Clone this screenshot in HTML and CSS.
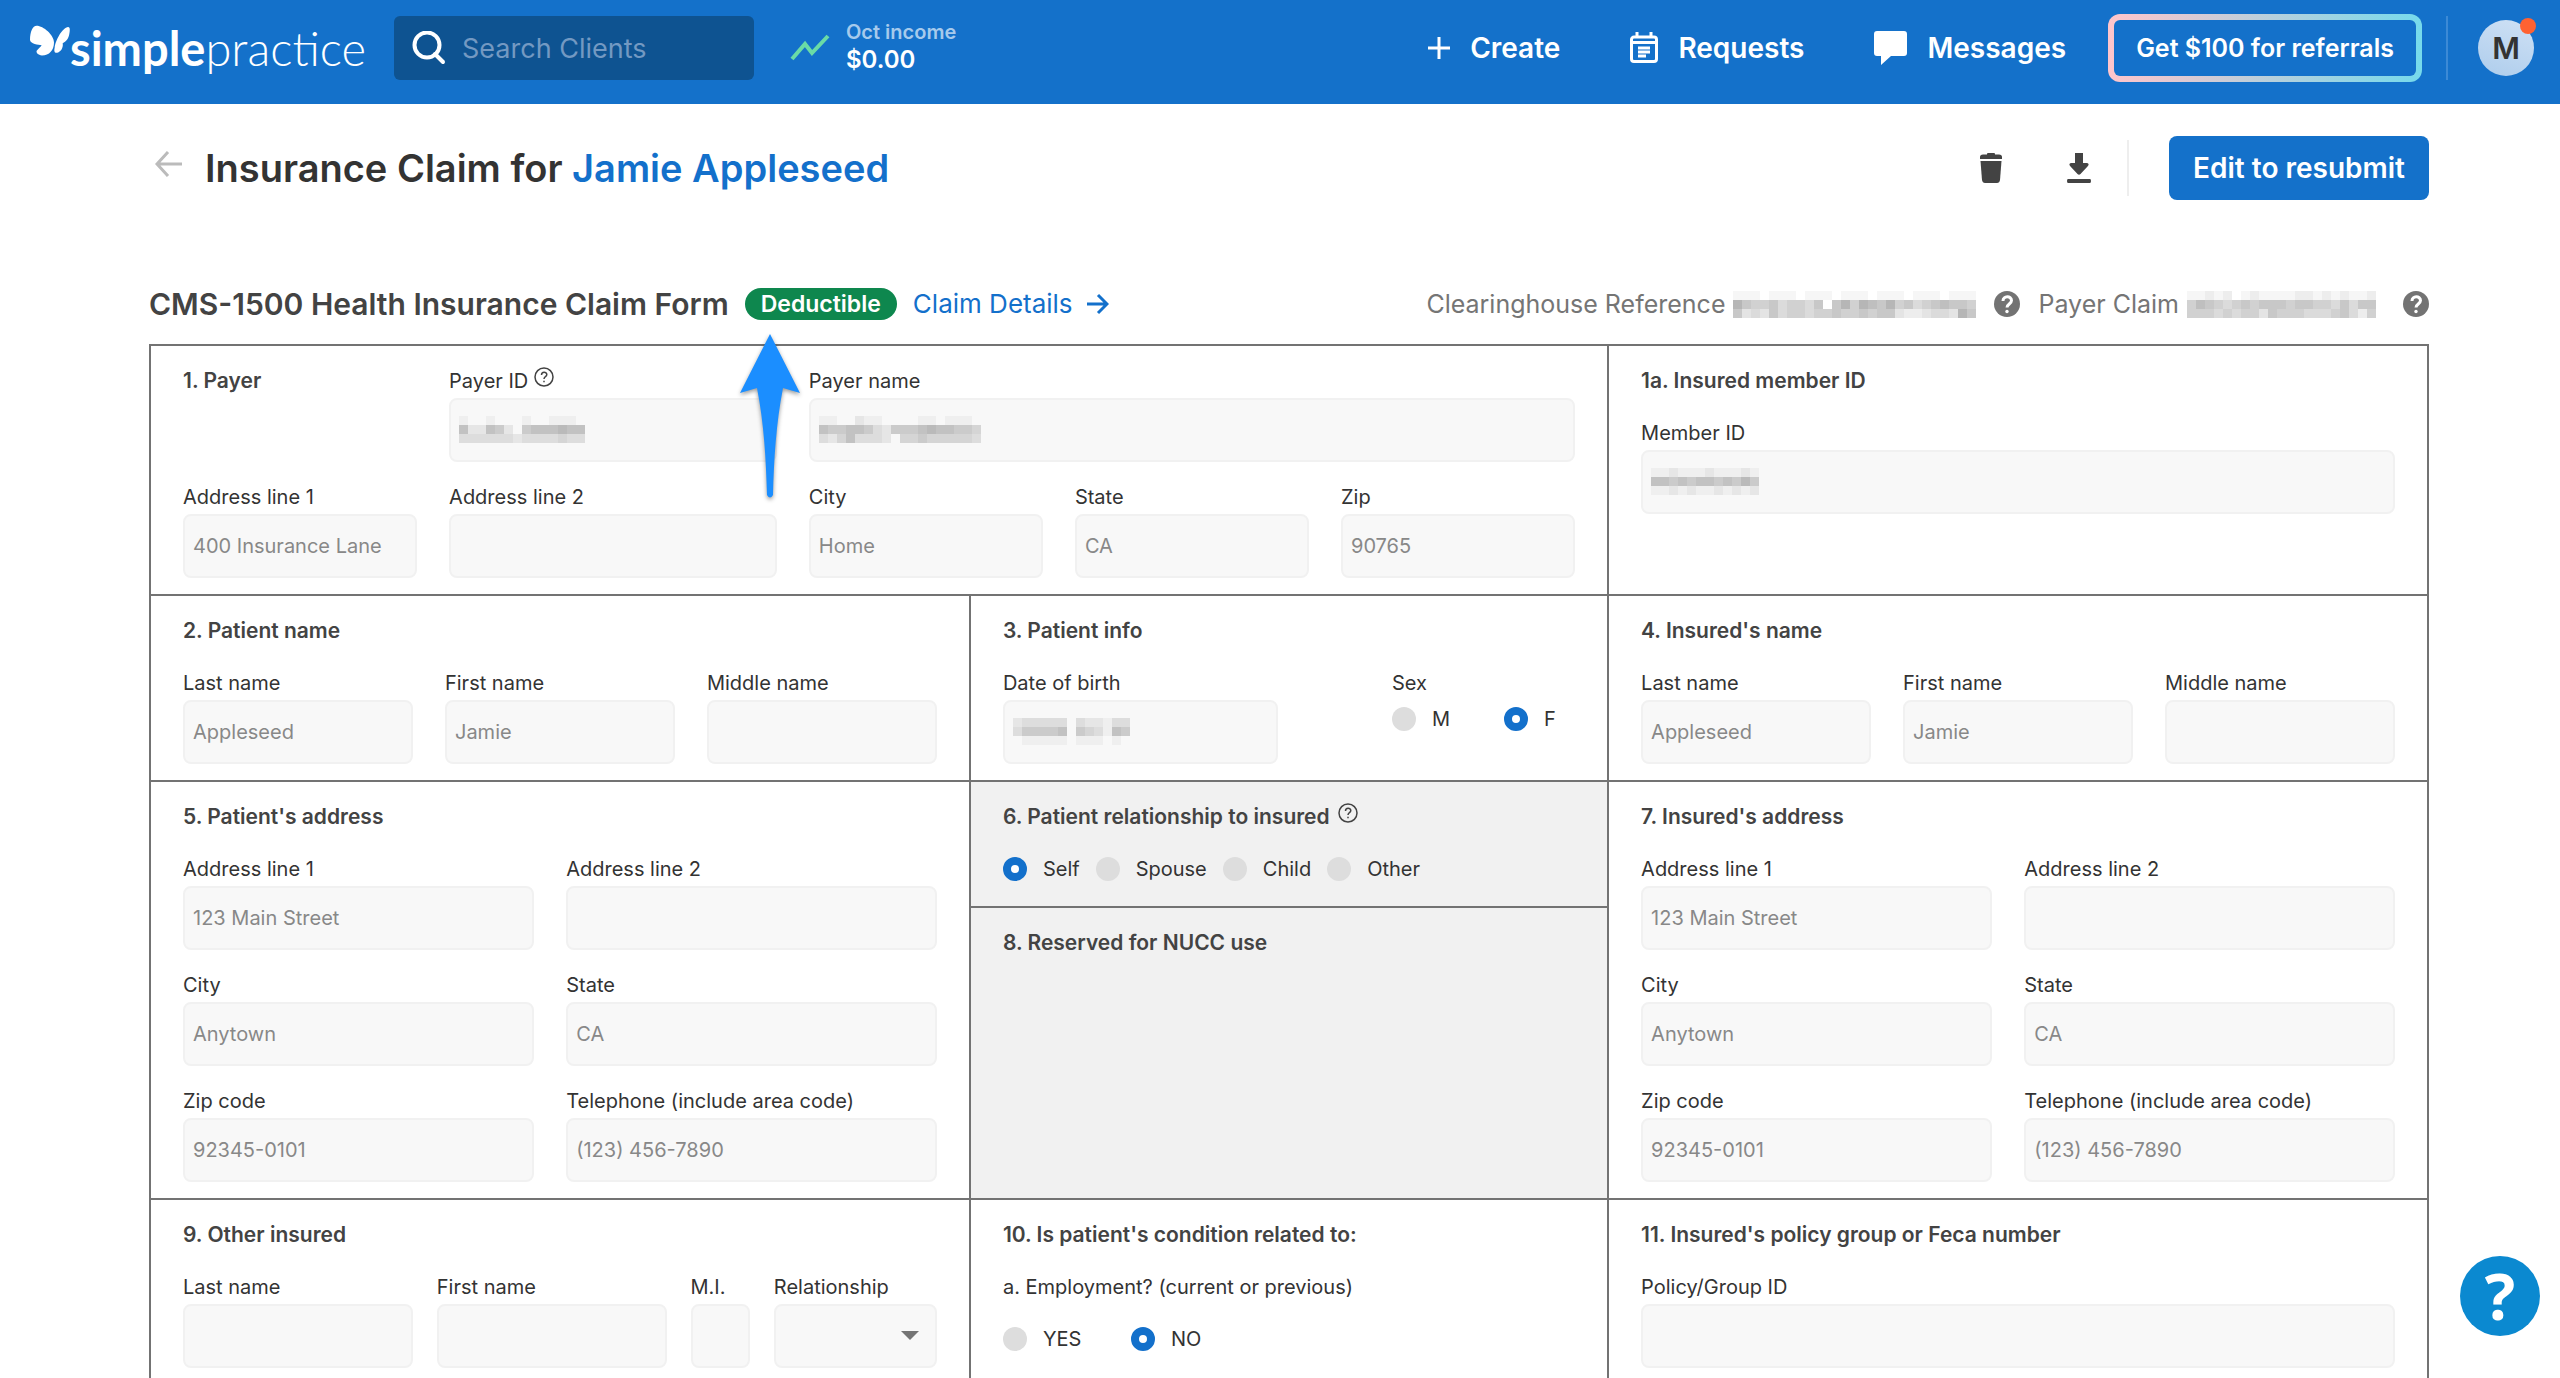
FILE: index.html
```html
<!DOCTYPE html>
<html lang="en">
<head>
    <meta charset="UTF-8">
    <meta name="viewport" content="width=device-width, initial-scale=1.0">
    <title>Insurance Claim</title>
    <link rel="stylesheet" href="styles.css">
</head>
<body>
    <header class="topbar">
        <a class="logo" href="#">
            <svg class="logo-mark" viewBox="30 40 120 92" width="40" height="31">
                <path d="M50 42 C70 42 102 70 102 92 C102 115 88 131 66 131 C54 130 48 123 50 117 C54 111 61 106 65 100 C56 100 30 96 30 84 C30 60 38 42 50 42 Z"/>
                <path d="M142 46 C151 44 150 54 148 66 C146 80 138 90 128 94 C130 104 126 118 112 123 C102 124 102 116 104 108 C106 84 128 48 142 46 Z"/>
            </svg>
            <span class="logo-text"><b>simple</b>practice</span>
        </a>
        <div class="search">
            <svg viewBox="0 0 34 34" width="34" height="34">
                <circle cx="15" cy="14" r="12.5"/>
                <path d="M23 23 L31 31"/>
            </svg>
            <input type="text" placeholder="Search Clients" aria-label="Search Clients">
        </div>
        <a class="income" href="#">
            <svg viewBox="0 0 40 28" width="40" height="28">
                <path d="M2 25 L15 10 L22 19 L38 2"/>
            </svg>
            <span class="income-text">
                <span class="income-label">Oct income</span>
                <span class="income-value">$0.00</span>
            </span>
        </a>
        <nav class="top-nav">
            <button class="nav-item">
                <svg viewBox="0 0 22 22" width="22" height="22"><path class="line" d="M11 0 V22 M0 11 H22"/></svg>
                Create
            </button>
            <button class="nav-item">
                <svg viewBox="0 0 28 32" width="28" height="32">
                    <path class="line" d="M4 5 H24 A2.5 2.5 0 0 1 26.500 7.500 V27 A2.500 2.500 0 0 1 24 29.500 H4 A2.500 2.500 0 0 1 1.500 27 V7.500 A2.500 2.500 0 0 1 4 5 Z M7 0 V5 M21 0 V5 M2 10.500 H26 M8 16 H20 M8 20 H20 M8 24 H16"/>
                </svg>
                Requests
            </button>
            <button class="nav-item">
                <svg viewBox="0 0 33 34" width="33" height="34"><path class="solid" d="M3 0 H30 A3 3 0 0 1 33 3 V22 A3 3 0 0 1 30 25 H17 L7 34 V25 H3 A3 3 0 0 1 0 22 V3 A3 3 0 0 1 3 0 Z"/></svg>
                Messages
            </button>
        </nav>
        <button class="referral">Get $100 for referrals</button>
        <div class="account">
            <button class="avatar">M<span class="avatar-dot"></span></button>
        </div>
    </header>

    <main class="page">
        <div class="page-header">
            <a class="back" href="#" aria-label="Back">
                <svg viewBox="0 0 28 26" width="28" height="26"><path d="M27 13 H2 M13 1 L2 13 L13 25"/></svg>
            </a>
            <h1>Insurance Claim for <a href="#">Jamie Appleseed</a></h1>
            <div class="page-actions">
                <button class="icon-btn" aria-label="Delete">
                    <svg viewBox="0 0 24 32" width="24" height="32">
                        <path d="M8 2 Q8 1 9 1 H15 Q16 1 16 2 V2.500 H20 Q23 2.500 23 5 V7 H1 V5 Q1 2.500 4 2.500 H8 Z"/>
                        <path d="M1.500 9 H22.500 L21 28 Q20.500 31 18 31 H6 Q3.500 31 3 28 Z"/>
                    </svg>
                </button>
                <button class="icon-btn" aria-label="Download">
                    <svg viewBox="0 0 24 32" width="24" height="32">
                        <path d="M8 1 H16 V11 H20 Q23 12 20.500 14.500 L13.500 22 Q12 23.500 10.500 22 L3.500 14.500 Q1 12 4 11 H8 Z M1 27 H23 Q24 27 24 29 Q24 31 23 31 H1 Q0 31 0 29 Q0 27 1 27 Z"/>
                    </svg>
                </button>
                <button class="primary-btn">Edit to resubmit</button>
            </div>
        </div>

        <div class="claim-header">
            <h2>CMS-1500 Health Insurance Claim Form</h2>
            <div class="status">
                <span class="badge">Deductible</span>
                <svg class="pointer" viewBox="0 0 60 164" width="60" height="164">
                    <path d="M30 0 L60 59 L43 54 C36 90 34 125 33 161 Q30 166 27 161 C26 125 24 90 17 54 L0 59 Z"/>
                </svg>
            </div>
            <a class="details-link" href="#">
                Claim Details
                <svg viewBox="0 0 22 22" width="22" height="22"><path d="M0 11 H20 M11 2 L20 11 L11 20"/></svg>
            </a>
            <div class="references">
                <span>Clearinghouse Reference</span>
                <svg class="pixels" data-rows="111011101110111011101110111 865564554606858768564567665 634364554556556566322344386"></svg>
                <svg class="help-dot" viewBox="0 0 26 26" width="26" height="26"><circle cx="13" cy="13" r="13"/><path d="M9 10 C9 4.500 17.500 4.500 17.500 9.500 C17.500 13 13 13 13 16.500"/><circle class="dot" cx="13" cy="20.500" r="1.700"/></svg>
                <span>Payer Claim</span>
                <svg class="pixels" data-rows="1121201211112212121120 5765456566656655464660 5554545536555444564250"></svg>
                <svg class="help-dot" viewBox="0 0 26 26" width="26" height="26"><circle cx="13" cy="13" r="13"/><path d="M9 10 C9 4.500 17.500 4.500 17.500 9.500 C17.500 13 13 13 13 16.500"/><circle class="dot" cx="13" cy="20.500" r="1.700"/></svg>
            </div>
        </div>

        <form class="claim-form">
            <section class="box wide">
                <div class="fields payer">
                    <h3>1. Payer</h3>
                    <label class="field"><span class="label">Payer ID
                        <svg class="help-ring" viewBox="0 0 20 20" width="20" height="20"><circle cx="10" cy="10" r="9"/><path d="M7.500 8 C7.500 4.500 12.800 4.500 12.800 7.600 C12.800 9.800 10 9.600 10 12 M10 13.800 V15.200"/></svg></span>
                        <input type="text" readonly>
                        <svg class="pixels" data-rows="10010001001110 62265205666766 33333323333433"></svg>
                    </label>
                    <label class="field payer-name"><span class="label">Payer name</span><input type="text" readonly>
                        <svg class="pixels" data-rows="110021100001101110 655665325556766554 324633320445444443"></svg>
                    </label>
                    <label class="field"><span class="label">Address line 1</span><input type="text" value="400 Insurance Lane" readonly></label>
                    <label class="field"><span class="label">Address line 2</span><input type="text" readonly></label>
                    <label class="field"><span class="label">City</span><input type="text" value="Home" readonly></label>
                    <label class="field"><span class="label">State</span><input type="text" value="CA" readonly></label>
                    <label class="field"><span class="label">Zip</span><input type="text" value="90765" readonly></label>
                </div>
            </section>
            <section class="box">
                <h3>1a. Insured member ID</h3>
                <label class="field"><span class="label">Member ID</span><input type="text" readonly>
                    <svg class="pixels" data-rows="112111211121 665656656575 112121121212"></svg>
                </label>
            </section>

            <section class="box">
                <h3>2. Patient name</h3>
                <div class="fields thirds">
                    <label class="field"><span class="label">Last name</span><input type="text" value="Appleseed" readonly></label>
                    <label class="field"><span class="label">First name</span><input type="text" value="Jamie" readonly></label>
                    <label class="field"><span class="label">Middle name</span><input type="text" readonly></label>
                </div>
            </section>
            <section class="box">
                <h3>3. Patient info</h3>
                <div class="patient-info">
                    <label class="field dob"><span class="label">Date of birth</span><input type="text" readonly>
                        <svg class="pixels" data-rows="2333330322133 3555560543165 0111110111010"></svg>
                    </label>
                    <fieldset class="sex">
                        <legend class="label">Sex</legend>
                        <div class="options">
                            <label class="option"><input type="radio" name="sex">M</label>
                            <label class="option"><input type="radio" name="sex" checked>F</label>
                        </div>
                    </fieldset>
                </div>
            </section>
            <section class="box">
                <h3>4. Insured's name</h3>
                <div class="fields thirds">
                    <label class="field"><span class="label">Last name</span><input type="text" value="Appleseed" readonly></label>
                    <label class="field"><span class="label">First name</span><input type="text" value="Jamie" readonly></label>
                    <label class="field"><span class="label">Middle name</span><input type="text" readonly></label>
                </div>
            </section>

            <section class="box">
                <h3>5. Patient's address</h3>
                <div class="fields address">
                    <label class="field"><span class="label">Address line 1</span><input type="text" value="123 Main Street" readonly></label>
                    <label class="field"><span class="label">Address line 2</span><input type="text" readonly></label>
                    <label class="field"><span class="label">City</span><input type="text" value="Anytown" readonly></label>
                    <label class="field"><span class="label">State</span><input type="text" value="CA" readonly></label>
                    <label class="field"><span class="label">Zip code</span><input type="text" value="92345-0101" readonly></label>
                    <label class="field"><span class="label">Telephone (include area code)</span><input type="text" value="(123) 456-7890" readonly></label>
                </div>
            </section>
            <div class="stack">
                <section class="box shaded relationship">
                    <h3>6. Patient relationship to insured
                        <svg class="help-ring" viewBox="0 0 20 20" width="20" height="20"><circle cx="10" cy="10" r="9"/><path d="M7.500 8 C7.500 4.500 12.800 4.500 12.800 7.600 C12.800 9.800 10 9.600 10 12 M10 13.800 V15.200"/></svg></h3>
                    <div class="options">
                        <label class="option"><input type="radio" name="relationship" checked>Self</label>
                        <label class="option"><input type="radio" name="relationship">Spouse</label>
                        <label class="option"><input type="radio" name="relationship">Child</label>
                        <label class="option"><input type="radio" name="relationship">Other</label>
                    </div>
                </section>
                <section class="box shaded reserved">
                    <h3>8. Reserved for NUCC use</h3>
                </section>
            </div>
            <section class="box">
                <h3>7. Insured's address</h3>
                <div class="fields address">
                    <label class="field"><span class="label">Address line 1</span><input type="text" value="123 Main Street" readonly></label>
                    <label class="field"><span class="label">Address line 2</span><input type="text" readonly></label>
                    <label class="field"><span class="label">City</span><input type="text" value="Anytown" readonly></label>
                    <label class="field"><span class="label">State</span><input type="text" value="CA" readonly></label>
                    <label class="field"><span class="label">Zip code</span><input type="text" value="92345-0101" readonly></label>
                    <label class="field"><span class="label">Telephone (include area code)</span><input type="text" value="(123) 456-7890" readonly></label>
                </div>
            </section>

            <section class="box">
                <h3>9. Other insured</h3>
                <div class="fields other-insured">
                    <label class="field"><span class="label">Last name</span><input type="text" readonly></label>
                    <label class="field"><span class="label">First name</span><input type="text" readonly></label>
                    <label class="field"><span class="label">M.I.</span><input type="text" readonly></label>
                    <label class="field"><span class="label">Relationship</span><select><option></option></select>
                        <svg class="caret" viewBox="0 0 18 9" width="18" height="9"><path d="M0 0 H18 L9 9 Z"/></svg>
                    </label>
                </div>
            </section>
            <section class="box">
                <h3>10. Is patient's condition related to:</h3>
                <fieldset class="employment">
                    <legend class="label">a. Employment? (current or previous)</legend>
                    <div class="options">
                        <label class="option"><input type="radio" name="employment">YES</label>
                        <label class="option"><input type="radio" name="employment" checked>NO</label>
                    </div>
                </fieldset>
            </section>
            <section class="box">
                <h3>11. Insured's policy group or Feca number</h3>
                <label class="field"><span class="label">Policy/Group ID</span><input type="text" readonly></label>
            </section>
        </form>
    </main>

    <button class="help-btn" aria-label="Help">?</button>

    <script src="script.js"></script>
</body>
</html>
```
FILE: styles.css
```css
* {
    box-sizing: border-box;
}

html {
    scrollbar-width: none;
}

body {
    margin: 0;
    background: #fff;
    color: #333;
    font-family: Inter, "Liberation Sans", sans-serif;
    font-size: 20px;
    line-height: 24px;
}

a {
    color: #1370cb;
    text-decoration: none;
}

button, input, select {
    font: inherit;
    color: inherit;
}

button {
    border: 0;
    padding: 0;
    background: none;
    cursor: pointer;
}

h1, h2, h3 {
    margin: 0;
    font-weight: 600;
}

svg {
    display: block;
    flex: none;
}

/* Top bar */
.topbar {
    display: flex;
    align-items: center;
    height: 104px;
    padding: 0 26px 8px 30px;
    background: #1471ca;
    color: #fff;
}

.logo {
    display: flex;
    width: 364px;
    color: #fff;
}

.logo-mark {
    fill: #fff;
}

.logo-text {
    font-family: Lato, sans-serif;
    font-size: 47px;
    font-weight: 300;
    line-height: 46px;
}

.logo-text b {
    font-weight: 700;
}

.search {
    display: flex;
    align-items: center;
    gap: 16px;
    width: 360px;
    height: 64px;
    padding: 0 18px;
    border-radius: 6px;
    background: #0e5391;
}

.search svg {
    fill: none;
    stroke: #fff;
    stroke-width: 4;
    stroke-linecap: round;
}

.search input {
    flex: 1;
    min-width: 0;
    padding: 0;
    border: 0;
    outline: 0;
    background: none;
    font-size: 27px;
}

.search input::placeholder {
    color: #7399c2;
    opacity: 1;
}

.income {
    display: flex;
    align-items: center;
    gap: 16px;
    margin-left: 36px;
    color: #fff;
}

.income svg {
    fill: none;
    stroke: #6adba6;
    stroke-width: 4;
}

.income-text {
    display: flex;
    flex-direction: column;
    gap: 4px;
    padding-bottom: 4px;
}

.income-label {
    color: #a6caec;
    font-weight: 600;
}

.income-value {
    font-size: 24px;
    font-weight: 600;
}

.top-nav {
    display: flex;
    gap: 70px;
    margin-left: auto;
}

.nav-item {
    display: flex;
    align-items: center;
    gap: 20px;
    font-size: 28px;
    font-weight: 600;
}

.nav-item .line {
    fill: none;
    stroke: #fff;
    stroke-width: 3;
}

.nav-item .solid {
    fill: #fff;
}

.referral {
    height: 68px;
    margin-left: 42px;
    padding: 0 22px;
    border: 6px solid transparent;
    border-radius: 12px;
    background: linear-gradient(#1471ca, #1471ca) padding-box, linear-gradient(90deg, #ffc5cb, #76daec) border-box;
    font-size: 25px;
    font-weight: 600;
}

.account {
    display: flex;
    align-items: center;
    height: 64px;
    margin-left: 24px;
    padding-left: 30px;
    border-left: 2px solid #3c8ad6;
}

.avatar {
    position: relative;
    width: 56px;
    height: 56px;
    border-radius: 50%;
    background: linear-gradient(200deg, #cfe1f5, #aecdec);
    color: #333;
    font-size: 30px;
    font-weight: 600;
}

.avatar-dot {
    position: absolute;
    top: -2px;
    right: -2px;
    width: 16px;
    height: 16px;
    border-radius: 50%;
    background: #ff6232;
}

/* Page header */
.page {
    padding: 32px 131px 0 149px;
}

.page-header {
    display: flex;
    align-items: center;
    height: 64px;
}

.back {
    margin: 0 22px 8px 6px;
}

.back svg {
    fill: none;
    stroke: #bbb;
    stroke-width: 3;
}

h1 {
    color: #333;
    font-size: 38px;
    line-height: 48px;
}

.page-actions {
    display: flex;
    align-items: center;
    margin-left: auto;
}

.icon-btn {
    margin-right: 64px;
}

.icon-btn svg {
    fill: #434343;
}

.icon-btn + .icon-btn {
    margin-right: 40px;
    padding: 12px 36px 12px 0;
    border-right: 2px solid #eee;
}

.primary-btn {
    height: 64px;
    padding: 0 24px;
    border-radius: 8px;
    background: #1471ca;
    color: #fff;
    font-size: 28px;
    font-weight: 600;
}

/* Claim header */
.claim-header {
    display: flex;
    align-items: center;
    height: 32px;
    margin: 88px 0 24px;
    font-size: 26px;
    line-height: 32px;
}

.claim-header h2 {
    color: #434343;
    font-size: 30px;
}

.status {
    position: relative;
    margin: 0 16px;
}

.badge {
    display: block;
    padding: 0 16px;
    border-radius: 16px;
    background: #0e874e;
    color: #fff;
    font-size: 23px;
    font-weight: 600;
}

/* arrow that points at the badge, drawn over the form */
.pointer {
    position: absolute;
    top: 46px;
    left: -5px;
    z-index: 1;
    overflow: visible;
    fill: #1b8eff;
    filter: drop-shadow(0 2px 2px rgba(0, 0, 0, .4));
}

.details-link {
    display: flex;
    align-items: center;
    gap: 14px;
}

.details-link svg {
    fill: none;
    stroke: #1370cb;
    stroke-width: 3;
}

.references {
    display: flex;
    align-items: center;
    gap: 8px;
    margin-left: auto;
    color: #757575;
    font-size: 25px;
}

.help-dot {
    margin: 0 10px;
    fill: #737373;
}

.help-dot:last-child {
    margin-right: 0;
}

.help-dot path {
    fill: none;
    stroke: #fff;
    stroke-width: 3;
}

.help-dot .dot {
    fill: #fff;
}

/* Claim form */
.claim-form {
    display: grid;
    grid-template-columns: 9fr 7fr 9fr;
    gap: 2px;
    padding: 2px;
    background: #737373;
}

.box {
    min-width: 0;
    padding: 23px 32px 16px;
    background: #fff;
}

.wide {
    grid-column: span 2;
}

.shaded {
    background: #f1f1f1;
}

.stack {
    display: flex;
    flex-direction: column;
    gap: 2px;
}

.relationship {
    padding-bottom: 25px;
}

.reserved {
    flex: 1;
}

h3 {
    display: flex;
    gap: 8px;
    margin-bottom: 28px;
    color: #434343;
    font-size: 21px;
}

.fields {
    display: grid;
    gap: 23px 32px;
}

.thirds {
    grid-template-columns: repeat(3, 1fr);
}

.address {
    grid-template-columns: 18fr 19fr;
}

.payer {
    grid-template-columns: 5fr 7fr 5fr 5fr 5fr;
}

.payer-name {
    grid-column: span 3;
}

.other-insured {
    grid-template-columns: 31fr 31fr 8fr 22fr;
    column-gap: 24px;
}

.field {
    position: relative;
    display: flex;
    flex-direction: column;
    gap: 5px;
    min-width: 0;
}

.label {
    display: flex;
    gap: 6px;
    padding: 0;
    white-space: nowrap;
}

.field input, .field select {
    width: 100%;
    height: 64px;
    padding: 0 8px;
    border: 2px solid #f1f1f1;
    border-radius: 8px;
    outline: 0;
    background: #f8f8f8;
    color: #888;
}

.field select {
    appearance: none;
}

/* laid over the input box */
.field .pixels {
    position: absolute;
    bottom: 19px;
    left: 10px;
}

.caret {
    position: absolute;
    right: 18px;
    bottom: 28px;
    fill: #757575;
    pointer-events: none;
}

.help-ring {
    margin-top: -2px;
    fill: none;
    stroke: #434343;
    stroke-width: 1.5;
}

fieldset {
    min-width: 0;
    margin: 0;
    padding: 0;
    border: 0;
}

.patient-info {
    display: flex;
    justify-content: space-between;
}

.dob {
    width: 48%;
}

.sex {
    width: 32%;
}

.sex .options {
    margin-top: 12px;
}

.sex .option {
    min-width: 96px;
}

.employment .options {
    margin-top: 28px;
}

.employment .option {
    min-width: 112px;
}

.options {
    display: flex;
    gap: 16px;
}

.option {
    display: flex;
    align-items: center;
    gap: 16px;
}

.option input {
    appearance: none;
    width: 24px;
    height: 24px;
    margin: 0;
    border-radius: 50%;
    background: #ddd;
}

.option input:checked {
    border: 8px solid #1370cb;
    background: #fff;
}

.help-btn {
    position: fixed;
    right: 20px;
    bottom: 42px;
    width: 80px;
    height: 80px;
    border-radius: 50%;
    background: #0b89d0;
    color: #fff;
    font-family: "Open Sans", sans-serif;
    font-size: 64px;
    font-weight: 700;
    line-height: 80px;
}
```
FILE: script.js
```javascript
// Draw the hidden values as grey blocks, one hex digit for each block
const size = 9;
document.querySelectorAll('.pixels').forEach((svg) => {
    const rows = svg.dataset.rows.split(' ');
    svg.setAttribute('width', rows[0].length * size);
    svg.setAttribute('height', rows.length * size);
    svg.setAttribute('shape-rendering', 'crispEdges');
    let blocks = '';
    rows.forEach((row, y) => {
        row.split('').forEach((level, x) => {
            blocks += `<rect x="${x * size}" y="${y * size}" width="${size}" height="${size}" fill-opacity="${parseInt(level, 16) / 28}"/>`;
        });
    });
    svg.innerHTML = blocks;
});
```
